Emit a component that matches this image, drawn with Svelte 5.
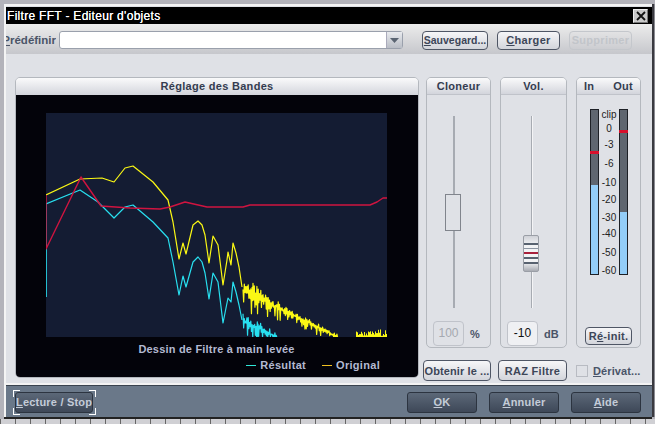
<script lang="ts">
  const plotW = 341
  const plotH = 224
  const originX = 46
  const originY = 113

  // deterministic noise so the tail of the spectrum stays the same every run
  function noise(i: number) {
    const v = Math.sin(i * 12.9898) * 43758.5453
    return v - Math.floor(v)
  }

  function toPoints(list: number[][]) {
    return list.map(([x, y]) => `${x},${y}`).join(' ')
  }

  function band(stops: number[][], spread: number, seed: number) {
    const out: number[][] = []
    let n = seed
    const start = stops[0][0]
    for (let s = 0; s < stops.length - 1; s++) {
      const [x0, y0] = stops[s]
      const [x1, y1] = stops[s + 1]
      for (let x = x0; x < x1; x += 1.3) {
        const t = (x - x0) / (x1 - x0)
        const y = y0 + (y1 - y0) * t
        const amp = Math.max(spread * (1.1 - (x - start) / 70), 5)
        n++
        const down = noise(n + 900) > 0.55 ? amp * 1.7 * noise(n + 500) : amp * 0.6 * noise(n + 500)
        out.push([x, Math.min(337, y - noise(n) * amp * 0.8)])
        out.push([x + 0.65, Math.min(337, y + down)])
      }
    }
    return out
  }

  const yellowHead = [
    [46, 195], [80, 179], [102, 178], [114, 182], [125, 168], [133, 166], [153, 182],
    [168, 200], [173, 222], [179, 259], [183, 243], [186, 254], [193, 225], [198, 221],
    [202, 225], [205, 235], [209, 263], [213, 236], [218, 245], [223, 285], [227, 260],
    [228, 252], [231, 265], [233, 243], [236, 253], [239, 267], [242, 287]
  ]
  const yellowTail = band(
    [[243, 290], [253, 293], [263, 300], [273, 305], [287, 313], [303, 320], [320, 328], [337, 337]],
    13, 1
  )
  const cyanHead = [
    [46, 297], [46, 204], [80, 190], [98, 202], [114, 218], [125, 207], [133, 205],
    [153, 222], [168, 238], [173, 262], [179, 295], [183, 276], [186, 287], [193, 262],
    [198, 257], [202, 262], [205, 273], [209, 299], [213, 273], [218, 282], [223, 323],
    [228, 298], [231, 302], [233, 282], [236, 292], [239, 305], [242, 320]
  ]
  const cyanTail = band([[243, 322], [258, 328], [277, 337]], 10, 40)
  const red = [
    [46, 195], [46, 249], [81, 177], [101, 206], [130, 208], [160, 209], [170, 207],
    [185, 202], [207, 207], [243, 207], [250, 205], [307, 205], [370, 205], [377, 202],
    [383, 198], [387, 198]
  ]
  const cyanStem = [[46, 249], [46, 297]]

  // little spikes that pop up at the right end of the plot
  const spikes: number[][] = []
  for (let x = 342; x < 387; x += 1) {
    const h = x > 355 ? 1 + noise(x) * (x > 375 ? 7 : 5) : noise(x) > 0.85 ? 8 : 0
    if (h) spikes.push([x + 0.5, h])
  }

  const scale = [
    { t: 'clip', h: 14 },
    { t: '0', h: 16 },
    { t: '-3', h: 19 },
    { t: '-6', h: 19 },
    { t: '-10', h: 17 },
    { t: '-20', h: 18 },
    { t: '-30', h: 16 },
    { t: '-40', h: 19 },
    { t: '-50', h: 18 },
    { t: '-60', h: 12 }
  ]
</script>

<div class="window">
  <div class="titlebar">
    <span>Filtre FFT - Editeur d'objets</span>
    <button class="close" aria-label="Fermer">
      <svg width="10" height="10" viewBox="0 0 10 10"><path d="M1 1 9 9M9 1 1 9" stroke="#111" stroke-width="1.8" /></svg>
    </button>
  </div>

  <div class="toolbar">
    <div class="preset-label"><span><u>P</u>rédéfinir</span></div>
    <div class="combo">
      <div class="combo-arrow">
        <svg width="9" height="5" viewBox="0 0 9 5"><path d="M0 0h9L4.500 5z" fill="#5a6472" /></svg>
      </div>
    </div>
    <button class="btn save"><u>S</u>auvegard...</button>
    <button class="btn load"><u>C</u>harger</button>
    <button class="btn remove" disabled>Supprimer</button>
  </div>

  <div class="content">
    <section class="panel chart-panel">
      <h2>Réglage des Bandes</h2>
      <div class="chart">
        <svg class="plot" width={plotW} height={plotH} viewBox="{originX} {originY} {plotW} {plotH}">
          <polyline points={toPoints(cyanHead)} class="cyan" />
          <polyline points={toPoints(cyanTail)} class="cyan" />
          <polyline points={toPoints(yellowHead)} class="yellow" />
          <polyline points={toPoints(yellowTail)} class="yellow" />
          {#each spikes as [x, h]}
            <line x1={x} x2={x} y1={337} y2={337 - h} class="yellow-line" />
          {/each}
          <polyline points={toPoints(cyanStem)} class="cyan" />
          <polyline points={toPoints(red)} class="red" />
        </svg>
        <div class="chart-caption">Dessin de Filtre à main levée</div>
        <div class="legend">
          <i class="dash teal"></i><span>Résultat</span>
          <i class="dash amber"></i><span>Original</span>
        </div>
      </div>
    </section>

    <div class="side">
      <div class="strips">
        <section class="panel strip">
          <h2>Cloneur</h2>
          <div class="fader">
            <div class="track"></div>
            <div class="thumb plain"></div>
          </div>
          <div class="readout">
            <span class="value off">100</span>
            <span class="unit">%</span>
          </div>
        </section>

        <section class="panel strip">
          <h2>Vol.</h2>
          <div class="fader vol">
            <div class="track light"></div>
            <div class="thumb ribbed">
              <b></b><b class="pale"></b><b class="mid"></b><b></b><b></b>
            </div>
          </div>
          <div class="readout">
            <span class="value">-10</span>
            <span class="unit">dB</span>
          </div>
        </section>

        <section class="panel strip meters">
          <h2 class="in-out"><span>In</span><span>Out</span></h2>
          <div class="meter-row">
            <div class="meter">
              <div class="peak in"></div>
              <div class="level in"></div>
            </div>
            <div class="scale">
              {#each scale as s}
                <span style="height:{s.h}px">{s.t}</span>
              {/each}
            </div>
            <div class="meter">
              <div class="peak out"></div>
              <div class="level out"></div>
            </div>
          </div>
          <button class="btn reset">R<u>é</u>-init.</button>
        </section>
      </div>

      <div class="actions">
        <button class="btn get">Obtenir le ...</button>
        <button class="btn raz">RAZ Filtre</button>
        <label class="check"><i></i><span><u>D</u>érivat...</span></label>
      </div>
    </div>
  </div>

  <div class="footer">
    <div class="focus-wrap">
      <button class="dark play"><u>L</u>ecture / Stop</button>
    </div>
    <div class="footer-right">
      <button class="dark"><u>O</u>K</button>
      <button class="dark"><u>A</u>nnuler</button>
      <button class="dark"><u>A</u>ide</button>
    </div>
  </div>
</div>
<div class="ticks"></div>

<style>
  :global(body) {
    margin: 0;
    background: #b3b3ba;
    overflow: hidden;
  }

  .window {
    box-sizing: border-box;
    width: 648px;
    height: 413px;
    margin: 4px 0 0 4px;
    display: flex;
    flex-direction: column;
    background: #dfe1e6;
    border: 1px solid #f4f4f4;
    border-width: 2px 0 0 2px;
    box-shadow: 2px 0 0 #3a3a40, 0 2px 0 #222, 4px 0 0 #8b8b92;
    font-family: "Liberation Sans", Arial, sans-serif;
    font-size: 11px;
    font-weight: bold;
    color: #343c50;
  }

  .titlebar {
    height: 17px;
    margin-top: 1px;
    flex: none;
    display: flex;
    align-items: center;
    justify-content: space-between;
    background: #000;
    color: #fff;
    font-size: 12px;
    letter-spacing: 0.3px;
    font-weight: normal;
    padding: 0 4px 0 1px;
    text-shadow: 0 0 0.6px #fff;
  }

  .close {
    box-sizing: border-box;
    width: 15px;
    height: 14px;
    padding: 0;
    display: flex;
    align-items: center;
    justify-content: center;
    background: #c9c9c9;
    border: 1px solid #eee;
    border-right-color: #777;
    border-bottom-color: #777;
  }

  .toolbar {
    flex: none;
    box-sizing: border-box;
    height: 30px;
    padding-top: 2px;
    display: flex;
    align-items: center;
    background: linear-gradient(#ececec, #c6c7cc);
    overflow: hidden;
  }

  .preset-label {
    width: 50px;
    margin-right: 3px;
    flex: none;
    display: flex;
    justify-content: flex-end;
    font-size: 11.500px;
    color: #4a5468;
    white-space: nowrap;
    overflow: hidden;
  }

  .preset-label span {
    flex: none;
  }

  .combo {
    box-sizing: border-box;
    width: 344px;
    height: 18px;
    flex: none;
    display: flex;
    justify-content: flex-end;
    background: #fff;
    border: 1px solid #9aa0ac;
    border-radius: 3px;
  }

  .combo-arrow {
    width: 15px;
    display: flex;
    align-items: center;
    justify-content: center;
    background: linear-gradient(#e8eaee, #b9bdc6);
    border-left: 1px solid #aab;
  }

  .btn {
    box-sizing: border-box;
    padding: 0;
    font: inherit;
    color: #3d4658;
    letter-spacing: 0.3px;
    white-space: nowrap;
    overflow: hidden;
    background: linear-gradient(#f6f6f8, #d3d5db);
    border: 1px solid #4f5665;
    border-radius: 4px;
  }

  .save {
    width: 66px;
    height: 19px;
    margin-left: 19px;
    letter-spacing: 0;
    font-size: 10.500px;
  }

  .load {
    width: 63px;
    height: 19px;
    margin-left: 9px;
  }

  .remove {
    width: 63px;
    height: 19px;
    margin-left: 9px;
    color: #c2c5ca;
    border-color: #c4c7cc;
    background: transparent;
  }

  .content {
    flex: 1;
    display: flex;
    align-items: flex-start;
    padding: 23px 0 0 9px;
  }

  .panel {
    box-sizing: border-box;
    border: 1px solid #b4b8be;
    border-radius: 5px;
    background: #dfe1e6;
  }

  .panel h2 {
    margin: 0;
    height: 17px;
    line-height: 16px;
    font-size: 11px;
    text-align: center;
    background: linear-gradient(#fafafb, #d3d5dc);
    border-radius: 4px 4px 0 0;
    border-bottom: 1px solid #c0c3ca;
    box-sizing: border-box;
    letter-spacing: 0.3px;
  }

  .chart-panel {
    width: 404px;
    height: 301px;
    flex: none;
    display: flex;
    flex-direction: column;
  }

  .chart-panel h2 {
    border-bottom: 0;
  }

  .chart {
    flex: 1;
    background: #03030a;
    border-radius: 0 0 4px 4px;
    padding: 18px 0 0 30px;
    display: flex;
    flex-direction: column;
  }

  .plot {
    display: block;
    background: #141c33;
  }

  .plot polyline {
    fill: none;
    stroke-width: 1.2;
    stroke-linejoin: round;
  }

  .plot .yellow {
    stroke: #fbf814;
  }

  .plot .cyan {
    stroke: #28e0f0;
  }

  .plot .red {
    stroke: #d01440;
    stroke-width: 1.4;
  }

  .yellow-line {
    stroke: #fbf814;
    stroke-width: 1;
  }

  .chart-caption {
    margin: 5px 0 0 0;
    width: 341px;
    text-align: center;
    color: #b4bad2;
    font-size: 11px;
    letter-spacing: 0.2px;
    line-height: 14px;
  }

  .legend {
    width: 334px;
    height: 14px;
    margin-top: 2px;
    display: flex;
    align-items: center;
    justify-content: flex-end;
    color: #b4bad2;
    font-size: 11px;
    letter-spacing: 0.3px;
  }

  .dash {
    display: block;
    width: 10px;
    height: 1px;
    margin-right: 4px;
  }

  .teal {
    background: #30e8d8;
  }

  .amber {
    background: #f0c020;
    margin-left: 16px;
  }

  .side {
    flex: none;
    margin-left: 4px;
    display: flex;
    flex-direction: column;
  }

  .strips {
    display: flex;
    gap: 9px;
    padding-left: 3px;
  }

  .strip {
    width: 65px;
    height: 271px;
    display: flex;
    flex-direction: column;
  }

  .strip:nth-child(2) {
    width: 67px;
  }

  .fader {
    position: relative;
    height: 192px;
    margin-top: 21px;
    flex: none;
  }

  .track {
    width: 2px;
    height: 100%;
    margin-left: 26px;
    background: #a7abb2;
  }

  .track.light {
    margin-left: 30px;
    background: linear-gradient(90deg, #a7abb2 50%, #f4f4f6 50%);
  }

  .thumb {
    position: absolute;
    box-sizing: border-box;
    width: 16px;
  }

  .thumb.plain {
    left: 18px;
    top: 78px;
    height: 37px;
    background: #dfe1e6;
    border: 1px solid #80848c;
  }

  .thumb.ribbed {
    left: 22px;
    top: 119px;
    height: 37px;
    display: flex;
    flex-direction: column;
    justify-content: center;
    gap: 3px;
    background: linear-gradient(#cfd1d7, #f2f3f5 25%, #f2f3f5 75%, #a8abb3);
    border: 1px solid #9a9ea6;
    border-radius: 2px;
  }

  .ribbed b {
    display: block;
    height: 2px;
    background: #586270;
  }

  .ribbed b.pale {
    background: #8c95a2;
    height: 1px;
  }

  .ribbed b.mid {
    background: #a8213c;
    height: 2px;
  }

  .readout {
    display: flex;
    align-items: center;
    margin-top: 13px;
    padding-left: 6px;
  }

  .value {
    box-sizing: border-box;
    width: 31px;
    height: 25px;
    line-height: 23px;
    text-align: center;
    font-weight: normal;
    font-size: 12px;
    color: #111;
    background: #eff0f3;
    border: 1px solid #c0c3ca;
    border-radius: 4px;
  }

  .value.off {
    color: #a5a9b0;
    background: transparent;
  }

  .unit {
    margin-left: 6px;
    font-size: 11px;
    color: #4a5468;
  }

  .in-out {
    display: flex;
    justify-content: space-between;
    padding: 0 7px;
  }

  .meter-row {
    display: flex;
    margin: 14px 0 0 13px;
    height: 166px;
  }

  .meter {
    position: relative;
    box-sizing: border-box;
    width: 9px;
    height: 166px;
    background: #5f6670;
    border: 1px solid #1d2026;
  }

  .level {
    position: absolute;
    left: 0;
    right: 0;
    bottom: 0;
    background: #93cdf8;
  }

  .level.in {
    top: 75px;
  }

  .level.out {
    top: 102px;
  }

  .peak {
    position: absolute;
    left: -1px;
    right: -1px;
    height: 3px;
    background: #d8102c;
    z-index: 1;
  }

  .peak.in {
    top: 41px;
  }

  .peak.out {
    top: 20px;
  }

  .scale {
    width: 20px;
    display: flex;
    flex-direction: column;
    align-items: center;
    font-size: 10px;
    font-weight: normal;
    color: #222;
    white-space: nowrap;
  }

  .scale span {
    line-height: 12px;
    display: block;
    flex: none;
  }

  .reset {
    width: 47px;
    height: 18px;
    margin: 52px 0 0 8px;
    font-size: 11px;
  }

  .actions {
    display: flex;
    align-items: center;
    margin-top: 12px;
    height: 21px;
  }

  .get {
    width: 68px;
    height: 21px;
    font-size: 11px;
    letter-spacing: 0.1px;
  }

  .raz {
    width: 69px;
    height: 21px;
    margin-left: 7px;
  }

  .check {
    display: flex;
    align-items: center;
    margin-left: 9px;
    color: #4a5468;
    letter-spacing: 0.1px;
  }

  .check i {
    box-sizing: border-box;
    width: 12px;
    height: 12px;
    border: 1px solid #b8bbc2;
    margin-right: 5px;
  }

  .footer {
    flex: none;
    box-sizing: border-box;
    height: 32px;
    display: flex;
    align-items: center;
    justify-content: space-between;
    padding: 1px 11px 0 7px;
    background: #6a7889;
    border-top: 1px solid #39424e;
    box-shadow: 0 -2px 0 #f3f3f3;
  }

  .dark {
    box-sizing: border-box;
    width: 70px;
    height: 21px;
    padding: 0;
    font: inherit;
    font-size: 11px;
    letter-spacing: 0.2px;
    color: #c4ccd8;
    background: linear-gradient(#5c6878, #3e4858);
    border: 1px solid #2c3440;
    border-radius: 3px;
    white-space: nowrap;
    overflow: hidden;
  }

  .focus-wrap {
    padding: 2px 3px 2px 2px;
    background:
      linear-gradient(#fff, #fff) 0 0 / 7px 1px no-repeat,
      linear-gradient(#fff, #fff) 0 0 / 1px 7px no-repeat,
      linear-gradient(#fff, #fff) 100% 0 / 7px 1px no-repeat,
      linear-gradient(#fff, #fff) 100% 0 / 1px 7px no-repeat,
      linear-gradient(#fff, #fff) 0 100% / 7px 1px no-repeat,
      linear-gradient(#fff, #fff) 0 100% / 1px 7px no-repeat,
      linear-gradient(#fff, #fff) 100% 100% / 7px 1px no-repeat,
      linear-gradient(#fff, #fff) 100% 100% / 1px 7px no-repeat;
  }

  .play {
    display: block;
    width: 78px;
  }

  .footer-right {
    display: flex;
    gap: 12px;
  }

  .ticks {
    height: 7px;
    background: repeating-linear-gradient(90deg, #666 0 1px, #d0d0d4 1px 15px);
    margin-top: 2px;
  }
</style>
